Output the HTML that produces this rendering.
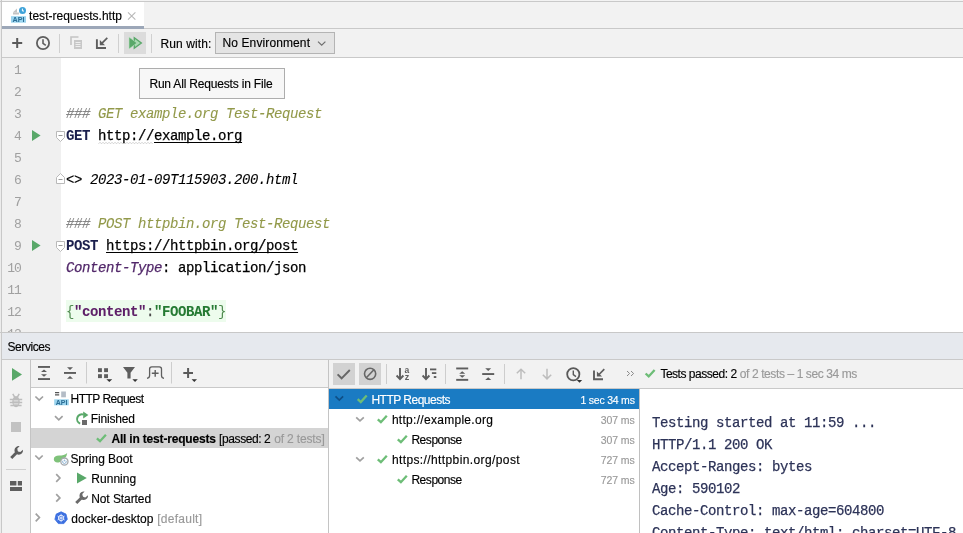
<!DOCTYPE html>
<html lang="en">
<head>
<meta charset="utf-8">
<title>test-requests.http</title>
<style>
*{box-sizing:border-box;margin:0;padding:0}
html,body{width:963px;height:533px;overflow:hidden;background:#fff}
body{position:relative;font-family:"Liberation Sans",sans-serif;font-size:12px;color:#000;line-height:1}
.abs{position:absolute}
.t{-webkit-text-stroke:0.15px currentColor;position:absolute;white-space:pre;line-height:16px;height:16px}
.mono{-webkit-text-stroke:0.25px currentColor;font-family:"Liberation Mono",monospace;font-size:14px;letter-spacing:-0.4px;text-decoration-skip-ink:none;white-space:pre;position:absolute;line-height:22px;height:22px}
.ln{position:absolute;left:2px;width:18.9px;text-align:right;font-family:"Liberation Mono",monospace;font-size:13px;letter-spacing:-1px;color:#a0a0a0;line-height:22px;height:22px}
.g{color:#999}
.mono b{-webkit-text-stroke:0.05px currentColor}
svg{position:absolute;overflow:visible}
</style>
</head>
<body>
<!-- frame -->
<div class="abs" style="left:0;top:0;width:963px;height:1px;background:#f3f3f3"></div><div class="abs" style="left:0;top:1px;width:963px;height:1px;background:#c9c9c9;z-index:1"></div>
<div class="abs" style="left:0;top:2px;width:963px;height:27px;background:#f2f2f2"></div>
<div class="abs" style="left:0;top:0;width:1px;height:533px;background:#ececec"></div><div class="abs" style="left:1px;top:0;width:1px;height:533px;background:#c8c8c8"></div>
<!-- tab -->
<div class="abs" style="left:2px;top:2px;width:142px;height:24px;background:#fff"></div>
<div class="abs" style="left:2px;top:26px;width:142px;height:3px;background:#9ca7b8"></div>
<div class="abs" style="left:144px;top:28px;width:819px;height:1px;background:#c9c9c9"></div>
<!-- toolbar -->
<div class="abs" style="left:2px;top:29px;width:961px;height:28px;background:#f2f2f2"></div>
<div class="abs" style="left:2px;top:57px;width:961px;height:1px;background:#c9c9c9"></div>
<div class="abs" style="left:124px;top:32px;width:22px;height:22px;background:#dcdcdc"></div>
<div class="abs" style="left:59px;top:34px;width:1px;height:19px;background:#d0d0d0"></div>
<div class="abs" style="left:118px;top:34px;width:1px;height:19px;background:#d0d0d0"></div>
<div class="abs" style="left:151px;top:34px;width:1px;height:19px;background:#d0d0d0"></div>
<div class="abs" style="left:215px;top:32px;width:120px;height:22px;background:#e4e4e4;border:1px solid #b4b4b4"></div>
<!-- editor -->
<div class="abs" style="left:2px;top:58px;width:58.6px;height:274px;background:#f0f0f0"></div>
<div class="abs" style="left:60.6px;top:58px;width:902.4px;height:274px;background:#fff"></div>
<div class="abs" style="left:66px;top:300px;width:160px;height:22px;background:#edfced"></div>
<!-- tooltip -->
<div class="abs" style="left:139px;top:68px;width:146px;height:31px;background:#f7f7f7;border:1px solid #adadad"></div>
<!-- services -->
<div class="abs" style="left:0;top:332px;width:963px;height:1px;background:#c8c8c8"></div>
<div class="abs" style="left:2px;top:333px;width:961px;height:26px;background:#e6e9ee"></div>
<div class="abs" style="left:2px;top:359px;width:961px;height:1px;background:#c9c9c9"></div>
<div class="abs" style="left:2px;top:360px;width:28px;height:173px;background:#f2f2f2"></div>
<div class="abs" style="left:30px;top:360px;width:1px;height:173px;background:#c4c4c4"></div>
<div class="abs" style="left:31px;top:360px;width:297px;height:27px;background:#f2f2f2"></div>
<div class="abs" style="left:31px;top:387px;width:297px;height:1px;background:#c9c9c9"></div>
<div class="abs" style="left:31px;top:388px;width:297px;height:145px;background:#fff"></div>
<div class="abs" style="left:31px;top:428px;width:297px;height:20px;background:#d4d4d4"></div>
<div class="abs" style="left:328px;top:360px;width:1px;height:173px;background:#c4c4c4"></div>
<div class="abs" style="left:329px;top:360px;width:634px;height:28px;background:#f2f2f2"></div>
<div class="abs" style="left:329px;top:388px;width:634px;height:1px;background:#c9c9c9"></div>
<div class="abs" style="left:329px;top:389px;width:310px;height:144px;background:#fff"></div>
<div class="abs" style="left:639px;top:389px;width:1px;height:144px;background:#c0c0c0"></div>
<div class="abs" style="left:640px;top:389px;width:323px;height:144px;background:#fff"></div>
<div class="abs" style="left:329px;top:389px;width:310px;height:20px;background:#1a7bc3"></div>
<div class="abs" style="left:333px;top:363px;width:22px;height:22px;background:#d2d2d2"></div>
<div class="abs" style="left:359px;top:363px;width:22px;height:22px;background:#d2d2d2"></div>
<!-- left tree text -->
<!-- right tree text -->
<!-- console -->

<svg width="963" height="533" viewBox="0 0 963 533" style="left:0;top:0;pointer-events:none;will-change:transform">
<!-- tab icon -->
<g id="tabicon">
<path d="M13 12.2 L17 8.6 V12.2 Z M13 12.4 H19 V14.6 H13 Z" fill="#c4c4c4"/>
<circle cx="22.5" cy="10.5" r="3.5" fill="#3fa3d9"/>
<path d="M22.4 8.6 V11 H24" stroke="#fff" stroke-width="1" fill="none"/>
<rect x="11" y="16.2" width="15" height="6.5" fill="#9bd4ee"/>
<text x="18.5" y="22.2" font-family="Liberation Sans, sans-serif" font-weight="bold" font-size="7.2" fill="#2b6e96" text-anchor="middle">API</text>
</g>
<path d="M128 12.3 L135.4 19.7 M135.4 12.3 L128 19.7" stroke="#b8b8b8" stroke-width="1.1" fill="none"/>
<!-- toolbar icons -->
<path d="M12.2 43 H22.2 M17.2 38 V48" stroke="#5a5a5a" stroke-width="2" fill="none"/>
<circle cx="43" cy="43" r="6.1" stroke="#5e5e5e" stroke-width="1.8" fill="none"/>
<path d="M43 39.3 V43.3 L45.8 45.4" stroke="#5e5e5e" stroke-width="1.6" fill="none"/>
<g id="copyicon" fill="none" stroke="#c4c4c4">
<path d="M71 45 V37 H78.5" stroke-width="1.6"/>
<rect x="74" y="40" width="8" height="9" fill="#c8c8c8" stroke="none"/>
<path d="M75.5 42.5 H80.5 M75.5 44.5 H80.5 M75.5 46.5 H80.5" stroke="#f2f2f2" stroke-width="0.9"/>
</g>
<g id="importicon" stroke="#5e5e5e" fill="none">
<path d="M96.9 39.2 V48 H106" stroke-width="1.9"/>
<path d="M107.3 37.8 L102 43.1" stroke-width="1.7"/>
<path d="M99.8 45.2 V40 L105 45.2 Z" fill="#5e5e5e" stroke="none"/>
</g>
<g id="runall">
<path d="M134.3 37.8 L141.3 43 L134.3 48.2 Z" fill="#a9d9b2" stroke="#59a869" stroke-width="1.4"/>
<path d="M129 37 L137 43 L129 49 Z" fill="#59a869" stroke="#bfe6c6" stroke-width="0.6"/>
</g>
<path d="M318 41.6 L321.7 45.1 L325.4 41.6" stroke="#6e6e6e" stroke-width="1.2" fill="none"/>
<!-- gutter icons -->
<path d="M32 130 L40.6 135.5 L32 141 Z" fill="#59a869"/>
<path d="M32 240 L40.6 245.5 L32 251 Z" fill="#59a869"/>
<g fill="#fff" stroke="#b9b9b9" stroke-width="1">
<path d="M56.5 131.5 H64.5 V137.5 L60.5 141.5 L56.5 137.5 Z"/>
<path d="M56.5 241.5 H64.5 V247.5 L60.5 251.5 L56.5 247.5 Z"/>
<path d="M56.5 183.5 H64.5 V177.5 L60.5 173.5 L56.5 177.5 Z"/>
</g>
<path d="M58.5 135.5 H62.5 M58.5 245.5 H62.5 M58.5 179.5 H62.5" stroke="#9a9a9a" stroke-width="1"/>
<path d="M98.5 143.8 l1.5 -1.5 l1.5 1.5 l1.5 -1.5 l1.5 1.5 l1.5 -1.5 l1.5 1.5 l1.5 -1.5 l1.5 1.5 l1.5 -1.5 l1.5 1.5 l1.5 -1.5 l1.5 1.5 l1.5 -1.5 l1.5 1.5 l1.5 -1.5 l1.5 1.5 l1.5 -1.5 l1.5 1.5 l1.5 -1.5 l1.5 1.5 l1.5 -1.5 l1.5 1.5 l1.5 -1.5 l1.5 1.5 l1.5 -1.5 l1.5 1.5 l1.5 -1.5 l1.5 1.5 l1.5 -1.5 l1.5 1.5 l1.5 -1.5 l1.5 1.5 l1.5 -1.5 l1.5 1.5 l1.5 -1.5 l1.5 1.5" stroke="#c9c9c9" stroke-width="0.9" fill="none"/>
<!-- services left strip -->
<path d="M12 368 L22 374.4 L12 380.8 Z" fill="#59a869"/>
<g id="bug" stroke="#bdbdbd" fill="none" stroke-width="1.5">
<ellipse cx="16" cy="401.6" rx="3.7" ry="5.6" fill="#bdbdbd" stroke="none"/>
<path d="M9.8 399.4 H22.2 M9.8 402.4 H22.2 M10.4 405.4 H21.6 M12.8 393.8 L14.8 397.4 M19.2 393.8 L17.2 397.4"/>
<path d="M13.6 400.9 H18.4 M13.6 403.9 H18.4" stroke="#e6e6e6" stroke-width="1"/>
</g>
<rect x="11" y="422" width="10" height="10" fill="#c2c2c2"/>
<g id="wrench1" fill="#5e5e5e">
<path d="M10.2 456.9 L16.6 450.5 L18.7 452.6 L12.3 459 Z"/>
<path d="M19.6 446.2 A4.3 4.3 0 1 0 23 449.8 L20.3 452 L17.8 451.4 L17.3 448.6 Z"/>
</g>
<path d="M6 469.5 H26" stroke="#d0d0d0" stroke-width="1"/>
<path d="M10 481 H16.4 V485.6 H10 Z M17.8 481 H22 V485.6 H17.8 Z M10 487 H22 V491 H10 Z" fill="#5e5e5e"/>
<!-- services toolbar -->
<g fill="#5e5e5e">
<rect x="38" y="366" width="12" height="1.9"/><rect x="38" y="378.1" width="12" height="1.9"/>
<path d="M41 372 L44 369.5 L47 372 Z M41 374.3 L44 376.8 L47 374.3 Z"/>
<rect x="64" y="372" width="12" height="1.9"/>
<path d="M67 367.3 L70 370 L73 367.3 Z M67 378.8 L70 376.1 L73 378.8 Z"/>
<rect x="98" y="368.2" width="3.9" height="3.9"/><rect x="104.1" y="368.2" width="3.9" height="3.9"/>
<rect x="98" y="374.2" width="3.9" height="3.9"/><rect x="104.1" y="374.2" width="3.9" height="3.9"/>
<path d="M123 367 H135 L130.6 372.8 V378.6 H127.4 V372.8 Z"/>
</g>
<g fill="#333">
<path d="M106.4 379.3 H112.2 L109.3 382 Z"/>
<path d="M132.4 379.3 H137.8 L135.1 382 Z"/>
<path d="M191.6 379.3 H197 L194.3 382 Z"/>
</g>
<path d="M147 378.3 Q149.6 378 149.6 375.5 V369 Q149.6 366.8 151.8 366.8 H159.3 Q161.5 366.8 161.5 369 V375.5 Q161.5 378 164 378.3" stroke="#5e5e5e" stroke-width="1.3" fill="none"/>
<path d="M151.8 373.3 H158.6 M155.2 369.9 V376.7" stroke="#5e5e5e" stroke-width="1.4" fill="none"/>
<path d="M183.3 373 H193 M188.1 368.1 V377.9" stroke="#5a5a5a" stroke-width="2" fill="none"/>
<path d="M86.5 362 V383.5 M171.5 362 V383.5" stroke="#cdcdcd" stroke-width="1"/>
<!-- right toolbar -->
<path d="M337.6 374.4 L341.6 378.3 L349.8 370" stroke="#666" stroke-width="1.9" fill="none"/>
<circle cx="370.1" cy="373.8" r="5.6" stroke="#666" stroke-width="1.6" fill="none"/>
<path d="M366.3 377.8 L373.9 369.8" stroke="#666" stroke-width="1.6"/>
<path d="M386.5 364 V384 M445.5 364 V384 M504.5 364 V384" stroke="#cdcdcd" stroke-width="1"/>
<g stroke="#5e5e5e" stroke-width="1.9" fill="none">
<path d="M400 368.1 V378.6 M396.6 375.5 L400 379.2 L403.4 375.5"/>
<path d="M426 368.1 V378.6 M422.6 375.5 L426 379.2 L429.4 375.5"/>
</g>
<text x="404.4" y="372.8" font-family="Liberation Sans, sans-serif" font-weight="bold" font-size="8.5" fill="#5e5e5e">a</text>
<text x="404.7" y="379.9" font-family="Liberation Sans, sans-serif" font-weight="bold" font-size="9" fill="#5e5e5e">z</text>
<g fill="#5e5e5e">
<rect x="430" y="368.5" width="6.3" height="1.8"/><rect x="431.9" y="372.2" width="4.4" height="1.8"/><rect x="433.8" y="376.1" width="2.5" height="1.9"/>
<rect x="456.2" y="367.5" width="12" height="1.9"/><rect x="456.2" y="378.9" width="12" height="1.9"/>
<path d="M459.2 373.8 L462.2 371.3 L465.2 373.8 Z M459.2 375.2 L462.2 377.7 L465.2 375.2 Z"/>
<rect x="482.2" y="373.1" width="12" height="1.9"/>
<path d="M485.2 368.2 L488.2 371 L491.2 368.2 Z M485.2 380 L488.2 377.2 L491.2 380 Z"/>
</g>
<g stroke="#bdbdbd" stroke-width="1.5" fill="none">
<path d="M521 379.3 V369.6 M516.8 373.3 L521 369.2 L525.2 373.3"/>
<path d="M547 368.8 V378.5 M542.8 374.8 L547 378.9 L551.2 374.8"/>
</g>
<circle cx="573.3" cy="374.3" r="6.1" stroke="#5a5a5a" stroke-width="1.8" fill="none"/>
<path d="M573.3 370.6 V374.6 L576 376.6" stroke="#5a5a5a" stroke-width="1.4" fill="none"/>
<path d="M576.8 380 H582.2 L579.5 382.8 Z" fill="#333"/>
<g stroke="#5e5e5e" fill="none">
<path d="M594 370.6 V379.3 H603" stroke-width="1.9"/>
<path d="M604.3 369.2 L599 374.5" stroke-width="1.7"/>
<path d="M596.9 376.6 V371.4 L602.1 376.6 Z" fill="#5e5e5e" stroke="none"/>
</g>
<path d="M627 371 L629.6 373.5 L627 376 M631 371 L633.6 373.5 L631 376" stroke="#8a8a8a" stroke-width="1" fill="none"/>
<!-- checks -->
<g stroke="#6dbd77" stroke-width="2.3" fill="none">
<path d="M645.6 373.5 L648.7 376.4 L654.6 369.9"/>
<path d="M96.9 438.3 L100.0 441.2 L105.9 434.7"/>
<path d="M357.7 399.1 L360.8 402.0 L366.7 395.5"/>
<path d="M377.8 419.3 L380.9 422.2 L386.8 415.7"/>
<path d="M397.8 439.3 L400.9 442.2 L406.8 435.7"/>
<path d="M377.8 459.3 L380.9 462.2 L386.8 455.7"/>
<path d="M397.8 479.3 L400.9 482.2 L406.8 475.7"/>
</g>
<!-- chevrons -->
<g stroke="#a0a0a0" stroke-width="1.7" fill="none">
<path d="M35.4 396.5 L39.2 400.1 L43 396.5"/>
<path d="M55 416.2 L58.8 419.8 L62.6 416.2"/>
<path d="M35.3 455.5 L39 459.1 L42.7 455.5"/>
<path d="M56.2 474.2 L59.9 478 L56.2 481.8"/>
<path d="M56.2 494.1 L59.9 497.9 L56.2 501.7"/>
<path d="M35.7 513.7 L39.4 517.5 L35.7 521.3"/>
<path d="M356.2 417.3 L360 420.9 L363.8 417.3"/>
<path d="M356.2 457.3 L360 460.9 L363.8 457.3"/>
</g>
<path d="M335.5 396.3 L339.3 400 L343.1 396.3" stroke="#0f4f86" stroke-width="1.7" fill="none"/>
<!-- tree icons -->
<g id="httpicon">
<path d="M55 392.6 H59.2 M55 394.8 H59.2" stroke="#555" stroke-width="1.3"/>
<rect x="61.2" y="391.5" width="4.7" height="5.8" fill="#b4bcc6"/>
<rect x="54.2" y="399.3" width="14.6" height="6" fill="#9bd4ee"/>
<text x="61.5" y="404.9" font-family="Liberation Sans, sans-serif" font-weight="bold" font-size="7" fill="#2b6e96" text-anchor="middle">API</text>
</g>
<g id="rerun">
<path d="M83.6 414.6 A4.7 4.7 0 1 0 80.2 423.6" stroke="#59a869" stroke-width="2" fill="none"/>
<path d="M83.2 411.6 L88.4 415 L83.2 418.6 Z" fill="#59a869"/>
<rect x="82" y="420" width="5" height="5" fill="#6a6a6a"/>
</g>
<g id="spring">
<path d="M67.2 453 C66.5 455.5 66.8 456.8 64 458.5 C61.5 460 60.5 462.6 57.5 462.6 C55.2 462.6 53.8 461.2 53.8 459.3 C53.8 456.8 56 455.6 59 455.6 C62.5 455.6 65 455 67.2 453 Z" fill="#7fc27a"/>
<circle cx="64.4" cy="461.6" r="3.6" fill="#fff" stroke="#a4a8ad" stroke-width="1.3"/>
<path d="M63 460.6 A1.8 1.8 0 1 0 65.8 460.6 M64.4 459.6 V461.4" stroke="#6f9fc9" stroke-width="0.8" fill="none"/>
</g>
<path d="M77 472.4 L86.8 477.9 L77 483.4 Z" fill="#59a869"/>
<g id="wrench2" fill="#6a6a6a">
<path d="M75.2 502 L81.8 495.4 L83.9 497.5 L77.3 504.1 Z"/>
<path d="M84.6 491.6 A4.3 4.3 0 1 0 88 495.2 L85.3 497.4 L82.8 496.8 L82.3 494 Z"/>
</g>
<g id="k8s">
<path d="M61.1 511.8 L66 514.1 L67.3 519.3 L63.9 523.6 L58.3 523.6 L54.9 519.3 L56.2 514.1 Z" fill="#3b6fe0" stroke="#3b6fe0" stroke-width="0.8" stroke-linejoin="round"/>
<circle cx="61.1" cy="518" r="2.7" stroke="#e8eefc" stroke-width="1" fill="none"/>
<path d="M61.1 513.8 V522.2 M57.5 516 L64.7 520 M57.5 520 L64.7 516" stroke="#dfe8fb" stroke-width="0.8"/>
</g>
</svg>

<div id="txt" style="position:absolute;left:0;top:0;width:963px;height:533px;will-change:transform">
<div class="t" id="t1" style="left:29.1px;top:8px;letter-spacing:0.01px">test-requests.http</div>
<div class="t" id="t2" style="left:160.5px;top:36px;letter-spacing:0.1px">Run with:</div>
<div class="t" id="t3" style="left:222.5px;top:35px;letter-spacing:0.11px">No Environment</div>
<div class="ln" style="top:60px">1</div>
<div class="ln" style="top:82px">2</div>
<div class="ln" style="top:104px">3</div>
<div class="ln" style="top:126px">4</div>
<div class="ln" style="top:148px">5</div>
<div class="ln" style="top:170px">6</div>
<div class="ln" style="top:192px">7</div>
<div class="ln" style="top:214px">8</div>
<div class="ln" style="top:236px">9</div>
<div class="ln" style="top:258px">10</div>
<div class="ln" style="top:280px">11</div>
<div class="ln" style="top:302px">12</div>
<div class="ln" style="top:324px;height:8px;overflow:hidden">13</div>
<div class="mono" style="left:66px;top:103px;font-style:italic;-webkit-text-stroke:0.1px currentColor"><span style="color:#858585">### </span><span style="color:#92994a">GET example.org Test-Request</span></div>
<div class="mono" style="left:66px;top:125px"><b style="color:#1b1f4d">GET</b> http://<span style="text-decoration:underline;text-underline-offset:2px;text-decoration-thickness:1px">example.org</span></div>
<div class="mono" style="left:66px;top:169px;-webkit-text-stroke:0.1px currentColor">&lt;&gt; <i>2023-01-09T115903.200.html</i></div>
<div class="mono" style="left:66px;top:213px;font-style:italic;-webkit-text-stroke:0.1px currentColor"><span style="color:#858585">### </span><span style="color:#92994a">POST httpbin.org Test-Request</span></div>
<div class="mono" style="left:66px;top:235px"><b style="color:#1b1f4d">POST</b> <span style="text-decoration:underline;text-underline-offset:2px;text-decoration-thickness:1px">https://httpbin.org/post</span></div>
<div class="mono" style="left:66px;top:257px"><i style="color:#52286a">Content-Type</i>: application/json</div>
<div class="mono" style="left:66px;top:301px"><span style="color:#4f8a4f;-webkit-text-stroke:0">{</span><b style="color:#5e2068">"content"</b><span style="color:#4a4a4a">:</span><b style="color:#257a33">"FOOBAR"</b><span style="color:#4f8a4f;-webkit-text-stroke:0">}</span></div>
<div class="t" id="t4" style="left:149.4px;top:76px;letter-spacing:-0.18px">Run All Requests in File</div>
<div class="t" id="t5" style="left:7.5px;top:339px;letter-spacing:-0.42px">Services</div>
<div class="t" id="t6" style="left:70.5px;top:391px;letter-spacing:-0.51px">HTTP Request</div>
<div class="t" id="t7" style="left:90.8px;top:411px;letter-spacing:-0.18px">Finished</div>
<div class="t" id="t8" style="left:111.4px;top:431px;letter-spacing:-0.18px"><b>All in test-requests</b></div>
<div class="t" id="t8b" style="left:219.1px;top:431px;letter-spacing:-0.41px">[passed: 2</div>
<div class="t g" id="t8c" style="left:274.2px;top:431px;letter-spacing:-0.15px">of 2 tests]</div>
<div class="t" id="t9" style="left:70.4px;top:451px;letter-spacing:-0.05px">Spring Boot</div>
<div class="t" id="t10" style="left:91.2px;top:471px;letter-spacing:0.06px">Running</div>
<div class="t" id="t11" style="left:91.2px;top:491px;letter-spacing:-0.08px">Not Started</div>
<div class="t" id="t12" style="left:71.3px;top:511px;letter-spacing:0.01px">docker-desktop</div>
<div class="t g" id="t12b" style="left:157.2px;top:511px;letter-spacing:0.27px">[default]</div>
<div class="t" id="t13" style="left:371.4px;top:392px;color:#fff;letter-spacing:-0.5px">HTTP Requests</div>
<div class="t" id="t14" style="left:580.4px;top:392px;color:#fff;font-size:10.5px;letter-spacing:-0.21px">1 sec 34 ms</div>
<div class="t" id="t15" style="left:391.9px;top:412px;letter-spacing:0.29px">http://example.org</div>
<div class="t g" id="t15b" style="left:600.8px;top:412px;font-size:10.5px;letter-spacing:-0.11px">307 ms</div>
<div class="t" id="t16" style="left:411.4px;top:432px;letter-spacing:-0.45px">Response</div>
<div class="t g" id="t16b" style="left:600.8px;top:432px;font-size:10.5px;letter-spacing:-0.11px">307 ms</div>
<div class="t" id="t17" style="left:391.9px;top:452px;letter-spacing:0.39px">https://httpbin.org/post</div>
<div class="t g" id="t17b" style="left:600.8px;top:452px;font-size:10.5px;letter-spacing:-0.12px">727 ms</div>
<div class="t" id="t18" style="left:411.4px;top:472px;letter-spacing:-0.45px">Response</div>
<div class="t g" id="t18b" style="left:600.8px;top:472px;font-size:10.5px;letter-spacing:-0.12px">727 ms</div>
<div class="t" id="t19" style="left:660.4px;top:366px;letter-spacing:-0.48px">Tests passed: 2</div>
<div class="t g" id="t19b" style="left:739.8px;top:366px;letter-spacing:-0.4px">of 2 tests – 1 sec 34 ms</div>
<div class="mono" style="left:652px;top:412px;color:#2d3358">Testing started at 11:59 ...</div>
<div class="mono" style="left:652px;top:434px;color:#2d3358">HTTP/1.1 200 OK</div>
<div class="mono" style="left:652px;top:456px;color:#2d3358">Accept-Ranges: bytes</div>
<div class="mono" style="left:652px;top:478px;color:#2d3358">Age: 590102</div>
<div class="mono" style="left:652px;top:500px;color:#2d3358">Cache-Control: max-age=604800</div>
<div class="mono" style="left:652px;top:522px;color:#2d3358;height:12px;overflow:hidden">Content-Type: text/html; charset=UTF-8</div>
</div>
</body>
</html>
